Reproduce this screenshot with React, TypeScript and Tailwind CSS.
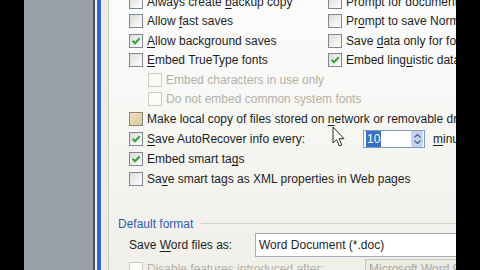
const leftTop = [
  { pre: "Always create ", key: "b", post: "ackup copy", checked: false },
  { pre: "Allow ", key: "f", post: "ast saves", checked: false },
  { pre: "", key: "A", post: "llow background saves", checked: true },
  { pre: "", key: "E", post: "mbed TrueType fonts", checked: false },
];

const rightTop = [
  { pre: "Prompt for document properties", key: "", post: "", checked: false },
  { pre: "Pr", key: "o", post: "mpt to save Normal template", checked: false },
  { pre: "Save ", key: "d", post: "ata only for forms", checked: false },
  { pre: "Embed ling", key: "u", post: "istic data", checked: true },
];

function Check({
  checked = false,
  disabled = false,
  hot = false,
}: {
  checked?: boolean;
  disabled?: boolean;
  hot?: boolean;
}) {
  const box = disabled
    ? "border-[#cfcdc2] bg-[#fbfbf9]"
    : hot
      ? "border-[#8a8677] bg-gradient-to-br from-[#eadfc0] to-[#dccb9c]"
      : "border-[#7d8894] bg-gradient-to-br from-[#dcdcd6] to-[#ffffff]";
  return (
    <span
      className={`flex h-[14px] w-[14px] shrink-0 items-center justify-center border ${box}`}
    >
      {checked && (
        <svg width="10" height="10" viewBox="0 0 10 10">
          <path
            d="M1.5 4.8 L4 7.3 L8.7 2.3"
            fill="none"
            stroke="#3ca33c"
            strokeWidth="2"
          />
        </svg>
      )}
    </span>
  );
}

function Label({
  pre,
  k,
  post,
  disabled = false,
}: {
  pre: string;
  k: string;
  post: string;
  disabled?: boolean;
}) {
  return (
    <span
      className={`whitespace-nowrap ${disabled ? "text-[#b3b1a6]" : "text-[#1e1e1e]"}`}
    >
      {pre}
      {k && <span className="underline underline-offset-2">{k}</span>}
      {post}
    </span>
  );
}

function Cursor() {
  return (
    <svg
      className="pointer-events-none absolute left-[332px] top-[126px]"
      width="14"
      height="22"
      viewBox="0 0 14 22"
    >
      <path
        d="M1 1 L1 17 L4.6 13.6 L7.4 20 L9.8 19 L7.1 12.7 L12 12.7 Z"
        fill="#ffffff"
        stroke="#2a2a2a"
        strokeWidth="1"
        strokeLinejoin="round"
      />
    </svg>
  );
}

export default function App() {
  return (
    <div
      className="relative flex h-[270px] w-[480px] overflow-hidden bg-black text-[12px] leading-none"
      style={{ fontFamily: '"Liberation Sans", Arial, sans-serif' }}
    >
      <div className="ml-[24px] w-[69px] shrink-0 bg-[#9aa0a8]" />
      <div className="w-[2px] shrink-0 bg-[#4b5058]" />
      <div className="w-[2px] shrink-0 bg-[#f2f4f8]" />
      <div className="w-[4px] shrink-0 bg-[#3066c6]" />
      <div className="w-[7px] shrink-0 bg-[#ecebe5]" />
      <div className="w-px shrink-0 bg-[#cdcbbf]" />

      {/* Tab page */}
      <div className="flex w-[347px] shrink-0 flex-col overflow-hidden bg-gradient-to-b from-[#fcfcfc] via-[#f6f6f3] to-[#f0efea]">
        <div className="mt-[-8px] flex flex-col pl-[20px]">
          {leftTop.map((l, i) => (
            <div key={i} className="flex h-[19.5px] items-center">
              <div className="flex w-[199px] shrink-0 items-center gap-[4px]">
                <Check checked={l.checked} />
                <Label pre={l.pre} k={l.key} post={l.post} />
              </div>
              <div className="flex shrink-0 items-center gap-[4px]">
                <Check checked={rightTop[i].checked} />
                <Label
                  pre={rightTop[i].pre}
                  k={rightTop[i].key}
                  post={rightTop[i].post}
                />
              </div>
            </div>
          ))}

          <div className="flex h-[19.5px] items-center gap-[4px] pl-[19px]">
            <Check disabled />
            <Label pre="Embed characters in use only" k="" post="" disabled />
          </div>
          <div className="flex h-[19.5px] items-center gap-[4px] pl-[19px]">
            <Check disabled />
            <Label pre="Do not embed common system fonts" k="" post="" disabled />
          </div>

          <div className="flex h-[19.5px] items-center gap-[4px]">
            <Check hot />
            <Label
              pre="Make local copy of files stored on "
              k="n"
              post="etwork or removable drives"
            />
          </div>

          <div className="flex h-[21px] items-center">
            <div className="flex w-[234px] shrink-0 items-center gap-[4px]">
              <Check checked />
              <Label pre="" k="S" post="ave AutoRecover info every:" />
            </div>
            <div className="flex h-[18px] w-[62px] shrink-0 items-center border border-[#7f9db9] bg-white pl-[2px] pr-px">
              <span className="bg-[#3a6fc8] px-px py-[2px] text-white">10</span>
              <span className="flex-1" />
              <span className="flex h-[16px] w-[12px] flex-col items-center justify-center gap-[2px] rounded-[2px] bg-[#c3d3f5]">
                <svg width="7" height="4" viewBox="0 0 7 4">
                  <path d="M0.5 3.5 L3.5 0.5 L6.5 3.5" fill="none" stroke="#4d6185" strokeWidth="1.3" />
                </svg>
                <svg width="7" height="4" viewBox="0 0 7 4">
                  <path d="M0.5 0.5 L3.5 3.5 L6.5 0.5" fill="none" stroke="#4d6185" strokeWidth="1.3" />
                </svg>
              </span>
            </div>
            <span className="ml-[8px] shrink-0 whitespace-nowrap text-[#1e1e1e]">
              <span className="underline underline-offset-2">m</span>inutes
            </span>
          </div>

          <div className="flex h-[19.5px] items-center gap-[4px]">
            <Check checked />
            <Label pre="Embed smart ta" k="g" post="s" />
          </div>
          <div className="flex h-[19.5px] items-center gap-[4px]">
            <Check />
            <Label pre="Sa" k="v" post="e smart tags as XML properties in Web pages" />
          </div>
        </div>

        {/* Default format group */}
        <div className="mt-[29px] flex items-center pl-[9px]">
          <span className="shrink-0 whitespace-nowrap text-[#2f5db3]">Default format</span>
          <div className="ml-[8px] h-px flex-1 bg-[#d5d3c6]" />
        </div>

        <div className="mt-[3px] flex items-center pl-[20px]">
          <span className="w-[126px] shrink-0 whitespace-nowrap text-[#1e1e1e]">
            Save <span className="underline underline-offset-2">W</span>ord files as:
          </span>
          <div className="flex h-[24px] w-[220px] shrink-0 items-center border border-[#a5acb5] bg-white pl-[3px] text-[#1e1e1e]">
            Word Document (*.doc)
          </div>
        </div>

        <div className="mt-[2px] flex items-center pl-[20px]">
          <div className="flex w-[236px] shrink-0 items-center gap-[4px]">
            <Check disabled />
            <Label pre="Disable features introduced after:" k="" post="" disabled />
          </div>
          <div className="flex h-[20px] w-[120px] shrink-0 items-center border border-[#c9c7ba] bg-[#ecebe3] pl-[3px] text-[#a9a79b]">
            Microsoft Word 97
          </div>
        </div>
      </div>

      <Cursor />
    </div>
  );
}
